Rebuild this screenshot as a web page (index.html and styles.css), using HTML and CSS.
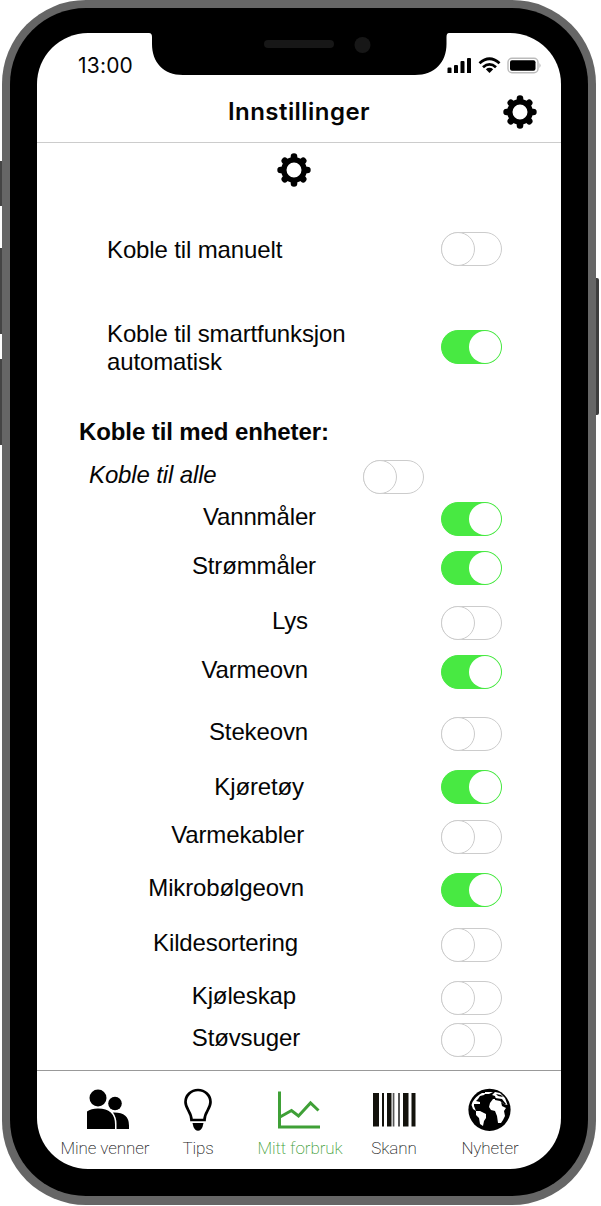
FILE: index.html
```html
<!DOCTYPE html>
<html lang="no">
<head>
<meta charset="utf-8">
<title>Innstillinger</title>
<link rel="stylesheet" href="styles.css">
</head>
<body>
<svg width="0" height="0" class="defs">
  <symbol id="gear" viewBox="0 0 34 34">
    <circle cx="17" cy="17" r="10.200" fill="none" stroke="#000" stroke-width="5.400"/>
    <path d="M17 3.600v2M17 28.400v2M3.600 17h2M28.400 17h2M7.800 7.800l1 1M25.200 25.200l1 1M7.800 26.200l1-1M25.200 8.800l1-1" stroke="#000" stroke-width="6.600" stroke-linecap="round"/>
  </symbol>
</svg>
<div class="phone">
  <span class="side mute"></span><span class="side up"></span><span class="side down"></span><span class="side power"></span>
  <div class="bezel">
    <div class="screen">
      <svg class="notch" width="300" height="42" viewBox="0 0 300 42"><path d="M0 0Q3 0 3 4V11C3 29 14 42 34 42H266C286 42 297.500 29 297.500 11V4Q297.500 0 300 0Z"/><rect x="115" y="7" width="70" height="8" rx="4" fill="#171717"/><circle cx="213.500" cy="12" r="8" fill="#171717"/></svg>
      <div class="status">
        <span class="time">13:00</span>
        <svg width="94" height="18" viewBox="0 0 94 18">
          <path d="M0.500 11.500q0-1 1-1h2q1 0 1 1v4.500h-4zM7 9q0-1 1-1h2q1 0 1 1v7H7zM13.500 5q0-1 1-1h2q1 0 1 1v11h-4zM20 2q0-1 1-1h2q1 0 1 1v14h-4z"/>
          <g fill="none" stroke="#000" stroke-width="2.800"><path d="M32.500 6.200Q42.500-2.600 52.500 6.200"/><path d="M36 10.200Q42.500 4.500 49 10.200"/></g>
          <path d="M38.800 12.200Q42.500 9.300 46.200 12.200L42.500 16Z"/>
          <rect x="61" y="1.200" width="30" height="14.600" rx="4" fill="none" stroke="#bbb" stroke-width="1.400"/>
          <rect x="63" y="3.200" width="25.500" height="10.600" rx="2"/><path d="M92.500 6q2 2.500 0 5z" fill="#aaa"/>
        </svg>
      </div>
      <header class="header"><h1>Innstillinger</h1><svg class="gear" width="34" height="34"><use href="#gear"/></svg></header>
      <main class="settings">
        <svg class="gear center" width="34" height="34"><use href="#gear"/></svg>
        <div class="row general"><span class="label">Koble til manuelt</span><i class="toggle"></i></div>
        <div class="row general auto"><span class="label">Koble til smartfunksjon<br>automatisk</span><i class="toggle on"></i></div>
        <h2>Koble til med enheter:</h2>
        <div class="row all"><span class="label">Koble til alle</span><i class="toggle"></i></div>
        <div class="devices">
          <div class="row"><span class="label">Vannmåler</span><i class="toggle on"></i></div>
          <div class="row"><span class="label">Strømmåler</span><i class="toggle on"></i></div>
          <div class="row"><span class="label">Lys</span><i class="toggle"></i></div>
          <div class="row"><span class="label">Varmeovn</span><i class="toggle on"></i></div>
          <div class="row"><span class="label">Stekeovn</span><i class="toggle"></i></div>
          <div class="row"><span class="label">Kjøretøy</span><i class="toggle on"></i></div>
          <div class="row"><span class="label">Varmekabler</span><i class="toggle"></i></div>
          <div class="row"><span class="label">Mikrobølgeovn</span><i class="toggle on"></i></div>
          <div class="row"><span class="label">Kildesortering</span><i class="toggle"></i></div>
          <div class="row"><span class="label">Kjøleskap</span><i class="toggle"></i></div>
          <div class="row"><span class="label">Støvsuger</span><i class="toggle"></i></div>
        </div>
      </main>
      <nav class="tabs">
        <a class="tab"><svg class="people" width="44" height="44" viewBox="0 0 44 44"><circle cx="12" cy="11" r="8.500"/><circle cx="29" cy="16.500" r="6.800"/><path d="M1 42V24.500Q5 21.500 12 21.500Q29 21.500 29 37.500V42ZM30.500 42V36.500Q30.500 30.500 27 25.500Q43 25 43 38.500V42Z"/></svg><span>Mine venner</span></a>
        <a class="tab"><svg width="44" height="44" viewBox="0 0 44 44"><path d="M15.500 33C15.500 25 9.500 22 9.500 15A12.500 12 0 0 1 34.500 15C34.500 22 28.500 25 28.500 33Z" fill="none" stroke="#000" stroke-width="2.700"/><path d="M16.500 36H27.500L26.500 40Q25 43.700 22 43.700Q19 43.700 17.500 40Z"/></svg><span>Tips</span></a>
        <a class="tab active"><svg width="44" height="44" viewBox="0 0 44 44"><path d="M1.500 4.500V40H42" fill="none" stroke="#3fa037" stroke-width="3"/><path d="M2 30L13.500 23.500L20.500 29L32.500 16L40.500 23.500" fill="none" stroke="#3fa037" stroke-width="3"/></svg><span>Mitt forbruk</span></a>
        <a class="tab"><svg width="44" height="44" viewBox="0 0 44 44"><path d="M1 6h6v33.500H1zM10 6h2v33.500h-2zM15 6h4.500v33.500H15zM31 6h5.500v33.500H31zM39.500 6h4v33.500h-4z" fill="#13120c"/><path d="M20.700 6h1.700v33.500h-1.700zM26 6h2v33.500h-2z" fill="#555"/></svg><span>Skann</span></a>
        <a class="tab"><svg width="44" height="44" viewBox="0 0 44 44"><circle cx="21.500" cy="22.800" r="21.100"/><g fill="#fff"><path d="M4.500 15Q8 9 14 6L18 6L16 8L12 9L10 12L8 14L12 15L12 17L6 17L6 19L8 24L5 22L3.500 18Z"/><path d="M17 5L25 5L21 7L17 7Z"/><path d="M8 24L12 24L18 27L18 31L16 34L15 39L12 37L11 31L8 28Z"/><path d="M22 16L25 12L28 12L27 9L24 8L27 5L32 6L37 11L39.500 18L36 17L33 15L34 19L38 21L36 24L37 29L35 33L33 36L30 36L29 29L27 24L23 23L21 20Z"/></g><path d="M27 11L34 12L38 17L36 17L32 14L27 13ZM28 7L33 8L35 10L30 9Z"/></svg><span>Nyheter</span></a>
      </nav>
    </div>
  </div>
</div>
</body>
</html>
```
FILE: styles.css
```css
*, *::before { box-sizing: border-box; }
body { margin: 0; background: #fff; color: #050505; font-family: "Liberation Sans", Arial, sans-serif; }
svg { display: block; flex: none; }
.defs { position: absolute; }
.phone { position: relative; width: 594px; height: 1205px; margin-left: 2px; padding: 8px; background: #666; border-radius: 84px; }
.bezel { height: 1188px; width: 578px; padding: 25px 27px 27px 27px; background: #000; border-radius: 76px; }
.screen { position: relative; display: flex; flex-direction: column; height: 1136px; background: #fff; border-radius: 51px; }
.notch { position: absolute; left: 112px; top: 0; }
.side { position: absolute; left: -2px; width: 2px; background: #444; }
.mute { top: 161px; height: 45px; }
.up { top: 248px; height: 86px; }
.down { top: 359px; height: 86px; }
.power { left: 594px; top: 278px; width: 3px; height: 137px; background: #3d3d3d; border-radius: 0 2px 2px 0; }

.status { display: flex; justify-content: space-between; align-items: center; height: 48px; padding: 17px 20px 0 41px; }
.time { font: 400 21px/30px Inter, sans-serif; letter-spacing: 0.2px; }
.status svg { margin-top: 1px; }
.header { display: grid; grid-template-columns: 1fr 34px; align-items: center; height: 62px; padding: 0 24px 0 58px; border-bottom: 1px solid #ccc; }
.header h1 { margin: 0; text-align: center; font: 600 24px/30px Inter, sans-serif; letter-spacing: 0.45px; }

.settings { height: 927px; flex: none; }
.center { margin: 10px auto 0 240px; }
.row { display: flex; height: 34px; align-items: center; font-size: 24px; line-height: 28px; letter-spacing: -0.13px; }
.general { justify-content: space-between; margin-top: 45px; padding: 0 59px 0 70px; }
.general .label { padding-top: 1px; }
.general.auto { margin-top: 64px; }
.settings h2 { margin: 54px 0 0 42px; font-size: 24px; line-height: 28px; letter-spacing: -0.1px; }
.all { margin-top: 14px; padding-left: 52px; font-style: italic; }
.all .label { width: 274px; padding-bottom: 4px; }
.devices { display: flex; flex-direction: column; padding-right: 59px; }
.devices .row { justify-content: flex-end; margin-top: 15px; }
.devices .label { padding-bottom: 4px; margin-right: 133px; }
.devices .row:nth-child(1) { margin-top: 8px; }
.devices .row:nth-child(3) { margin-top: 21px; }
.devices .row:nth-child(5) { margin-top: 28px; }
.devices .row:nth-child(6), .devices .row:nth-child(8), .devices .row:nth-child(10) { margin-top: 19px; }
.devices .row:nth-child(7) { margin-top: 16px; }
.devices .row:nth-child(9) { margin-top: 21px; }
.devices .row:nth-child(11) { margin-top: 8px; }
.devices .row:nth-child(-n+2) .label { margin-right: 125px; }
.devices .row:nth-child(6) .label { padding-bottom: 0; }
.devices .row:nth-child(n+6) .label { margin-right: 137px; }
.devices .row:nth-child(9) .label { margin-right: 143px; }
.devices .row:nth-child(10) .label { margin-right: 145px; }
.devices .row:nth-child(11) .label { margin-right: 141px; }
.toggle { display: flex; flex: none; width: 61px; height: 34px; border: 1px solid #ccc; border-radius: 17px; }
.toggle::before { content: ""; width: 34px; height: 34px; margin: -1px; border: 1px solid #ccc; border-radius: 50%; background: #fff; }
.toggle.on { justify-content: flex-end; background: #48e942; border-color: #48e942; }
.toggle.on::before { width: 32px; height: 32px; margin: 0; border: 0; }

.tabs { display: grid; grid-template-columns: 90px 28px 108px 12px 112px; column-gap: 34px; justify-content: start; height: 99px; padding: 16px 0 0 23px; border-top: 1px solid #999; }
.tab { display: flex; flex-direction: column; align-items: center; white-space: nowrap; font: 200 17px/24px Roboto, sans-serif; letter-spacing: -0.1px; color: #222; }
.tab span { margin-top: 5px; }
.tab:nth-child(1) .people { margin-left: 6px; }
.tab.active { color: #3fa037; }
```
